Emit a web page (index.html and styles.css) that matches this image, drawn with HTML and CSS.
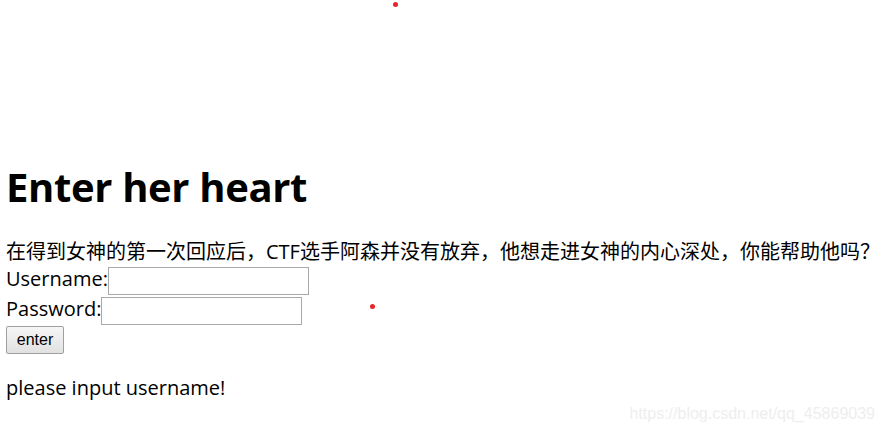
FILE: index.html
```html
<!DOCTYPE html>
<html>
<head>
<meta charset="utf-8">
<link rel="stylesheet" href="styles.css">
</head>
<body>
<div class="stage"></div>
<h1 class="title">Enter her heart</h1>
<form class="login">
在得到女神的第一次回应后，CTF选手阿森并没有放弃，他想走进女神的内心深处，你能帮助他吗？<br>
Username:<input class="field" type="text"><br>
Password:<input class="field" type="password"><br>
<button class="btn" type="button">enter</button>
</form>
<p class="msg">please input username!</p>
<span class="dot dot-a"></span>
<span class="dot dot-b"></span>
<div class="watermark">https://blog.csdn.net/qq_45869039</div>
</body>
</html>
```
FILE: styles.css
```css
html, body { margin: 0; padding: 0; background: #fff; }
body {
  padding: 0 0 0 6px;
  font-family: "Open Sans", "Noto Sans CJK SC", sans-serif;
  font-size: 20px;
  color: #000;
  overflow: hidden;
  height: 434px;
  position: relative;
}
.stage { height: 161px; }
.title {
  font-size: 40px;
  font-weight: bold;
  margin: 0 0 25px 0;
  line-height: 1.3;
  letter-spacing: -0.35px;
}
.login { margin: 0; line-height: 1.35; }
.field {
  width: 195px;
  height: 24px;
  padding: 1px 2px;
  border: 1px solid #a9a9a9;
  margin: 0;
  vertical-align: baseline;
  font-size: 16px;
}
.btn {
  font-family: "Liberation Sans", Arial, sans-serif;
  font-size: 16px;
  width: 58px;
  height: 28px;
  border: 1px solid #a0a0a0;
  background: linear-gradient(#f6f6f6, #e1e1e1);
  border-radius: 2px;
  padding: 0;
  color: #000;
  vertical-align: top;
  margin-top: 1px;
}
.msg { margin: 20px 0 0 0; }
.dot {
  position: absolute;
  width: 5px; height: 5px;
  border-radius: 50%;
  background: #e8262a;
}
.dot-a { left: 393px; top: 2px; }
.dot-b { left: 370px; top: 304px; }
.watermark {
  position: absolute;
  right: 8px;
  bottom: 11px;
  font-family: "Liberation Sans", Arial, sans-serif;
  font-size: 16px;
  color: #eeeeee;
}
```
